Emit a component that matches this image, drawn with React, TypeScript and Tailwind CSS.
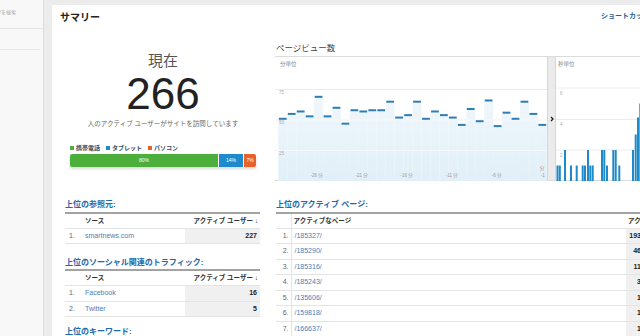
const minuteValues = [51, 55, 57, 53, 69, 53, 60, 47, 58, 57, 58, 58, 65, 52, 54, 65, 51, 57, 54, 52, 46, 59, 49, 66, 45, 56, 51, 65, 55, 46];

// [x, value] for the per-second bars
const secondBars: [number, number][] = [
  [0.5, 1], [2.8, 1], [8, 2], [14, 1], [19.7, 1], [25.7, 1], [28, 1], [31, 2], [33.3, 1], [35.7, 1],
  [45, 2], [47.3, 2], [50, 1], [56.3, 2], [58.7, 2], [62.3, 1], [76, 2], [78.7, 3], [81, 4.1], [83.3, 5],
];

const referrers = [{ name: 'smartnews.com', users: 227 }];
const social = [
  { name: 'Facebook', users: 16 },
  { name: 'Twitter', users: 5 },
];
const pages = [
  { path: '/185327/', users: 193 },
  { path: '/185290/', users: 46 },
  { path: '/185316/', users: 11 },
  { path: '/185243/', users: 3 },
  { path: '/135606/', users: 1 },
  { path: '/159818/', users: 1 },
  { path: '/166637/', users: 1 },
];

const minuteLabels = [
  { x: 41.7, t: '-26 分' },
  { x: 86.7, t: '-21 分' },
  { x: 131.7, t: '-16 分' },
  { x: 176.7, t: '-11 分' },
  { x: 221.7, t: '-6 分' },
];

function MinuteChart() {
  const step = 8.95;
  return (
    <svg width="272" height="124" className="block shrink-0">
      <defs>
        <linearGradient id="pvFill" gradientUnits="userSpaceOnUse" x1="0" y1="30" x2="0" y2="124">
          <stop offset="0" stopColor="#f2f8fc" />
          <stop offset="1" stopColor="#e1eff8" />
        </linearGradient>
      </defs>
      {[32.5, 63, 93.5].map((y) => (
        <line key={y} x1="0" x2="272" y1={y} y2={y} stroke="#ececec" strokeWidth="1" />
      ))}
      {minuteValues.map((v, i) => {
        const y = 124 - v * 1.22;
        return <rect key={i} x={3.3 + i * step} y={y} width={step} height={124 - y} fill="url(#pvFill)" />;
      })}
      {[63, 93.5].map((y) => (
        <line key={y} x1="0" x2="272" y1={y} y2={y} stroke="#ffffff" strokeOpacity="0.55" strokeWidth="1" />
      ))}
      {minuteValues.map((v, i) => (
        <rect key={i} x={3.3 + i * step + 0.6} y={124 - v * 1.22 - 1} width={step - 1.2} height="2" fill="#2f7db2" />
      ))}
      <text x="5" y="9" fontSize="5.5" fill="#888">分単位</text>
      <text x="4" y="36.5" fontSize="4.5" fill="#aaa">75</text>
      <text x="4" y="67" fontSize="4.5" fill="#aaa">50</text>
      <text x="4" y="97.5" fontSize="4.5" fill="#aaa">25</text>
      {minuteLabels.map((l) => (
        <text key={l.t} x={l.x} y="120" fontSize="4.5" fill="#999" textAnchor="middle">
          {l.t}
        </text>
      ))}
      <text x="267" y="113" fontSize="4.5" fill="#999" textAnchor="middle">分</text>
      <text x="267.7" y="120" fontSize="4.5" fill="#999" textAnchor="middle">-1</text>
    </svg>
  );
}

function SecondChart() {
  return (
    <svg width="84" height="124" className="block shrink-0">
      {[31, 62.5, 93].map((y) => (
        <line key={y} x1="0" x2="84" y1={y} y2={y} stroke="#ececec" strokeWidth="1" />
      ))}
      <text x="2" y="9" fontSize="5.5" fill="#888">秒単位</text>
      <text x="4" y="38" fontSize="4.5" fill="#aaa">6</text>
      <text x="4" y="69" fontSize="4.5" fill="#aaa">4</text>
      <text x="4" y="100" fontSize="4.5" fill="#aaa">2</text>
      {secondBars.map(([x, v]) => (
        <rect key={x} x={x} y={124 - v * 15.5} width="2" height={v * 15.5} fill="#1f8ac8" />
      ))}
    </svg>
  );
}

function Summary() {
  return (
    <div className="flex w-[206px] shrink-0 flex-col items-center pt-[24px]">
      <div className="text-[15px] leading-[18px] text-[#555]">現在</div>
      <div className="mt-[2px] text-[44px] leading-[44px] text-[#222]">266</div>
      <div className="mt-[3px] text-[6.5px] leading-[9px] text-[#666]">人のアクティブ ユーザーがサイトを訪問しています</div>
      <div className="mt-[16px] flex w-[186px] items-center gap-[6px] text-[6px] font-bold leading-[8px] text-[#3a4d60]">
        <span className="flex items-center gap-[2px]">
          <span className="h-[4px] w-[4px] bg-[#4caf3c]" />
          携帯電話
        </span>
        <span className="flex items-center gap-[2px]">
          <span className="h-[4px] w-[4px] bg-[#1d8bcb]" />
          タブレット
        </span>
        <span className="flex items-center gap-[2px]">
          <span className="h-[4px] w-[4px] bg-[#e8602a]" />
          パソコン
        </span>
      </div>
      <div className="mt-[2px] flex h-[13px] w-[186px] gap-[1px] overflow-hidden rounded-[2px] text-[5px] leading-[13px] text-white shadow-[0_2px_3px_rgba(0,0,0,0.15)]">
        <div className="w-[148px] bg-[#4caf3c] text-center">80%</div>
        <div className="w-[24px] bg-[#1d8bcb] text-center">14%</div>
        <div className="w-[12px] bg-[#e8602a] text-center">7%</div>
      </div>
    </div>
  );
}

interface SourceTableProps {
  title: string;
  rows: { name: string; users: number }[];
  className?: string;
}

function SourceTable({ title, rows, className }: SourceTableProps) {
  return (
    <div className={className}>
      <div className="h-[12px] text-[8px] font-bold leading-[12px] text-[#2069ad]">{title}</div>
      <table className="mt-[0.5px] w-full table-fixed border-collapse border-t-2 border-[#a3a3a3] text-[7px]">
        <colgroup>
          <col className="w-[15px]" />
          <col />
          <col className="w-[75px]" />
        </colgroup>
        <thead>
          <tr className="h-[15.5px] border-b border-[#e4e4e4] text-[6.5px] font-bold text-[#333]">
            <th />
            <th className="pl-[5px] text-left">ソース</th>
            <th className="whitespace-nowrap pr-[2px] text-right">アクティブ ユーザー ↓</th>
          </tr>
        </thead>
        <tbody>
          {rows.map((r, i) => (
            <tr key={r.name} className="h-[15.5px] border-b border-[#e4e4e4]">
              <td className="pl-[4px] text-[#666]">{i + 1}.</td>
              <td className="pl-[5px] text-[#4a80b8]">{r.name}</td>
              <td className="bg-[#f0f0f0] pr-[3px] text-right font-bold text-[#222]">{r.users}</td>
            </tr>
          ))}
        </tbody>
      </table>
    </div>
  );
}

function PagesTable() {
  return (
    <div className="overflow-hidden">
      <div className="h-[12px] whitespace-nowrap text-[8px] font-bold leading-[12px] text-[#2069ad]">上位のアクティブ ページ:</div>
      <table className="mt-[0.5px] w-[380px] table-fixed border-collapse border-t-2 border-[#a3a3a3] text-[7px]">
        <colgroup>
          <col className="w-[15px]" />
          <col className="w-[335px]" />
          <col className="w-[30px]" />
        </colgroup>
        <thead>
          <tr className="h-[15.5px] border-b border-[#e4e4e4] text-[6.5px] font-bold text-[#333]">
            <th className="border-r border-[#e4e4e4]" />
            <th className="pl-[2px] text-left">アクティブなページ</th>
            <th className="whitespace-nowrap pl-[2px] text-left">アクティブ ユーザー ↓</th>
          </tr>
        </thead>
        <tbody>
          {pages.map((p, i) => (
            <tr key={p.path} className="h-[15.5px] border-b border-[#e4e4e4]">
              <td className="border-r border-[#e4e4e4] pr-[2px] text-right text-[#666]">{i + 1}.</td>
              <td className="pl-[3px] text-[#4a80b8]">{p.path}</td>
              <td className="bg-[#f0f0f0] pl-[2px] font-bold text-[#222]">
                <span className="inline-block w-[13px] text-right">{p.users}</span>
              </td>
            </tr>
          ))}
        </tbody>
      </table>
    </div>
  );
}

export default function App() {
  return (
    <div className="flex h-[336px] w-[640px] overflow-hidden bg-[#ececec] font-['Liberation_Sans','Noto_Sans_CJK_JP',sans-serif]">
      <aside className="w-[44px] shrink-0 border-r border-[#dcdcdc] bg-[#f8f8f8]">
        <div className="h-[29px] border-b border-[#e6e6e6] pt-[9px]">
          <div className="flex w-[16px] justify-end overflow-hidden whitespace-nowrap text-[5px] leading-[6px] text-[#aaa]">
            レポートとヘルプを検索
          </div>
        </div>
        <div className="mr-[3px] h-[21px] border-b border-[#e6e6e6]" />
      </aside>

      <main className="min-w-0 flex-1 pl-[8px] pt-[5px]">
        <div className="h-full overflow-hidden bg-white pl-[8px]">
          <div className="flex h-[23px]">
            <div className="w-[541px] shrink-0 pt-[7px] text-[10px] font-bold leading-[12px] text-[#222]">サマリー</div>
            <div className="whitespace-nowrap pt-[6px] text-[7px] font-bold leading-[9px] text-[#2a5f8f]">ショートカット</div>
          </div>

          <div className="flex h-[171px]">
            <Summary />
            <div className="ml-[9px] min-w-0 flex-1">
              <div className="border-b border-[#dcdcdc] pb-[2.5px] pl-[1px] pt-[14.5px] text-[8.5px] leading-[11px] text-[#444]">
                ページビュー数
              </div>
              <div className="flex h-[124px] border-b border-[#dcdcdc]">
                <MinuteChart />
                <div className="flex w-[9px] shrink-0 items-center justify-center border-x border-[#d6d6d6] bg-[#ebebeb]">
                  <svg width="4" height="6" viewBox="0 0 4 6">
                    <path d="M1 1 L3 3 L1 5" fill="none" stroke="#222" strokeWidth="1.3" />
                  </svg>
                </div>
                <SecondChart />
              </div>
            </div>
          </div>

          <div className="flex">
            <div className="w-[206px] shrink-0 pl-[5px] pr-[6px]">
              <SourceTable title="上位の参照元:" rows={referrers} />
              <SourceTable title="上位のソーシャル関連のトラフィック:" rows={social} className="mt-[12.5px]" />
              <div className="mt-[9px] h-[12px] text-[8px] font-bold leading-[12px] text-[#2069ad]">上位のキーワード:</div>
            </div>
            <div className="ml-[9px] min-w-0 flex-1 pl-[1px]">
              <PagesTable />
            </div>
          </div>
        </div>
      </main>
    </div>
  );
}
